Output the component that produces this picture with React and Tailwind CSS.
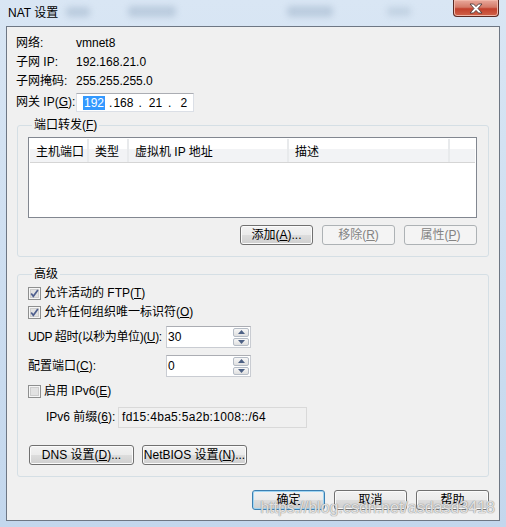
import React from 'react';

const FONT = "font-['Liberation_Sans','Noto_Sans_CJK_SC',sans-serif]";

function Check({ checked }) {
  return (
    <svg width="13" height="13" viewBox="0 0 13 13" className="shrink-0">
      <rect x="0.5" y="0.5" width="12" height="12" fill="#f6f6f6" stroke="#8e8f8f" />
      <rect x="2.5" y="2.5" width="8" height="8" fill="#e2e2e2" stroke="#cdcdcd" />
      {checked && (
        <path d="M3.2 6.4 L5.3 9.2 L9.9 2.9" fill="none" stroke="#4f5f8e" strokeWidth="1.7" />
      )}
    </svg>
  );
}

function Btn({ children, w, disabled, focus }) {
  let cls = 'border-[#707070] text-black shadow-[inset_0_0_0_1px_#fbfbfb] bg-[linear-gradient(#f2f2f2_0%,#ebebeb_50%,#dddddd_50%,#cfcfcf_100%)]';
  if (disabled) cls = 'border-[#adb2b5] text-[#838383] bg-[#f4f4f4]';
  if (focus) cls = 'border-[#3c7fb1] text-black shadow-[inset_0_0_0_1px_#9fd5f3] bg-[linear-gradient(#f2f2f2_0%,#ebebeb_50%,#dddddd_50%,#cfcfcf_100%)]';
  return (
    <div className={`${w} h-[20px] rounded-[3px] border ${cls} flex items-center justify-center whitespace-nowrap text-[12px] leading-[16px]`}>
      {children}
    </div>
  );
}

function Arrow({ up }) {
  return (
    <svg width="7" height="4" viewBox="0 0 7 4">
      <path d={up ? 'M0 4 L3.5 0 L7 4 Z' : 'M0 0 L3.5 4 L7 0 Z'} fill="#4d6185" />
    </svg>
  );
}

function Spin({ value }) {
  return (
    <div className="shrink-0 w-[85px] h-[22px] border border-[#c9ccd2] border-t-[#abadb3] bg-white flex">
      <div className="flex-1 pl-px text-[12px] leading-[20px]">{value}</div>
      <div className="w-[17px] flex flex-col gap-[1px] py-[1px] pr-[1px]">
        <div className="flex-1 border border-[#b5bcc6] rounded-[2px] bg-[linear-gradient(#f7f7f7,#e0e0e0)] flex items-center justify-center">
          <Arrow up />
        </div>
        <div className="flex-1 border border-[#b5bcc6] rounded-[2px] bg-[linear-gradient(#f7f7f7,#e0e0e0)] flex items-center justify-center">
          <Arrow />
        </div>
      </div>
    </div>
  );
}

export default function App() {
  return (
    <div className={`${FONT} w-[506px] h-[527px] relative overflow-hidden flex flex-col bg-[linear-gradient(180deg,#d9e6f4,#c3d7ed)] text-black`}>
      {/* blurred window behind the glass */}
      <div className="absolute left-[66px] top-[7px] w-[24px] h-[10px] rounded bg-[#8ea4bd]/40 blur-[3px]" />
      <div className="absolute left-[128px] top-[6px] w-[48px] h-[11px] rounded bg-[#8ea4bd]/40 blur-[3px]" />
      <div className="absolute left-[287px] top-[6px] w-[46px] h-[11px] rounded bg-[#8ea4bd]/40 blur-[3px]" />
      <div className="absolute left-[387px] top-[7px] w-[24px] h-[9px] rounded bg-[#8ea4bd]/30 blur-[3px]" />

      <div className="relative shrink-0 h-[26px] flex items-start justify-between pl-[8px] pr-[7px]">
        <div className="mt-[5px] text-[12px] leading-[16px]">NAT 设置</div>
        <div className="w-[46px] h-[17px] rounded-b-[4px] border border-t-0 border-[#5a2a24] bg-[linear-gradient(#e9a99c_0%,#d47a68_45%,#c2402c_55%,#d0634a_100%)] shadow-[inset_0_0_0_1px_#f0b6a8] flex items-center justify-center">
          <svg width="14" height="11" viewBox="0 0 14 11">
            <path d="M1 1 L4.5 1 L7 3.6 L9.5 1 L13 1 L9 5.5 L13 10 L9.5 10 L7 7.4 L4.5 10 L1 10 L5 5.5 Z" fill="#ffffff" stroke="#4b3a3a" strokeWidth="0.9" />
          </svg>
        </div>
      </div>

      <div className="mx-[6px] mb-[6px] flex-1 min-h-0 border border-[#6e7784] bg-[#f0f0f0] flex flex-col">
        <div className="pl-[9px] pt-[7px] text-[12px] leading-[19px]">
          <div className="flex h-[19px]"><span className="w-[60px]">网络:</span><span>vmnet8</span></div>
          <div className="flex h-[19px]"><span className="w-[60px]">子网 IP:</span><span>192.168.21.0</span></div>
          <div className="flex h-[19px]"><span className="w-[60px]">子网掩码:</span><span>255.255.255.0</span></div>
          <div className="flex h-[19px] mt-[2px] items-center">
            <span className="w-[60px] whitespace-nowrap">网关 IP(<u>G</u>):</span>
            <div className="w-[118px] h-[19px] border border-[#dbdfe6] border-t-[#abadb3] bg-white flex items-center leading-[14px]">
              <span className="ml-[6px] bg-[#3399ff] text-white px-px">192</span>
              <span className="ml-[4px]">.</span>
              <span className="ml-[1px]">168</span>
              <span className="ml-[5px]">.</span>
              <span className="ml-[7px]">21</span>
              <span className="ml-[6px]">.</span>
              <span className="ml-[9px]">2</span>
            </div>
          </div>
        </div>

        <fieldset className="mx-[10px] mt-[5px] border border-[#d5dfe5] rounded-[3px] pl-[10px] pr-[11px] pb-[11px]">
          <legend className="ml-[4px] px-[2px] text-[12px] leading-[16px]">端口转发(<u>F</u>)</legend>
          <div className="mt-[4px] w-[449px] h-[81px] border border-[#828790] bg-white p-px">
            <div className="h-[24px] flex text-[12px] bg-[linear-gradient(#ffffff_0%,#ffffff_45%,#f2f3f5_45%,#f2f3f5_100%)] border-b border-[#d5d5d5]">
              <div className="w-[59px] pl-[6px] pt-[5px] leading-[16px] border-r-2 border-[#e8eaec]">主机端口</div>
              <div className="w-[40px] pl-[6px] pt-[5px] leading-[16px] border-r-2 border-[#e8eaec]">类型</div>
              <div className="w-[160px] pl-[6px] pt-[5px] leading-[16px] border-r-2 border-[#e8eaec]">虚拟机 IP 地址</div>
              <div className="w-[161px] pl-[6px] pt-[5px] leading-[16px] border-r-2 border-[#e8eaec]">描述</div>
              <div className="flex-1" />
            </div>
          </div>
          <div className="mt-[7px] flex justify-end gap-[9px]">
            <Btn w="w-[73px]">添加(<u>A</u>)...</Btn>
            <Btn w="w-[73px]" disabled>移除(<u>R</u>)</Btn>
            <Btn w="w-[73px]" disabled>属性(<u>P</u>)</Btn>
          </div>
        </fieldset>

        <fieldset className="mx-[10px] mt-[9px] border border-[#d5dfe5] rounded-[3px] pl-[10px] pr-[11px] pb-[11px] text-[12px]">
          <legend className="ml-[4px] px-[2px] leading-[16px]">高级</legend>
          <div className="mt-[2px] h-[19px] flex items-center gap-[3px] leading-[19px]">
            <Check checked /><span>允许活动的 FTP(<u>T</u>)</span>
          </div>
          <div className="h-[19px] flex items-center gap-[3px] leading-[19px]">
            <Check checked /><span>允许任何组织唯一标识符(<u>O</u>)</span>
          </div>
          <div className="mt-[4px] flex items-center">
            <span className="w-[138px] shrink-0 whitespace-nowrap tracking-[-0.4px] leading-[19px]">UDP 超时(以秒为单位)(<u>U</u>):</span>
            <Spin value="30" />
          </div>
          <div className="mt-[7px] flex items-center">
            <span className="w-[138px] shrink-0 whitespace-nowrap leading-[19px]">配置端口(<u>C</u>):</span>
            <Spin value="0" />
          </div>
          <div className="mt-[5px] h-[19px] flex items-center gap-[3px] leading-[19px]">
            <Check /><span>启用 IPv6(<u>E</u>)</span>
          </div>
          <div className="mt-[6px] flex items-center">
            <span className="ml-[18px] w-[72px] shrink-0 whitespace-nowrap leading-[19px]">IPv6 前缀(<u>6</u>):</span>
            <div className="w-[189px] h-[21px] border border-[#d9d9d9] bg-[#f0f0f0] pl-[3px] leading-[19px] tracking-[0.3px]">
              fd15:4ba5:5a2b:1008::/64
            </div>
          </div>
          <div className="mt-[17px] flex gap-[8px] ml-px">
            <Btn w="w-[105px]">DNS 设置(<u>D</u>)...</Btn>
            <Btn w="w-[105px]">NetBIOS 设置(<u>N</u>)...</Btn>
          </div>
        </fieldset>

        <div className="mt-[13px] mr-[10px] flex justify-end gap-[9px]">
          <Btn w="w-[73px]" focus>确定</Btn>
          <Btn w="w-[73px]">取消</Btn>
          <Btn w="w-[73px]">帮助</Btn>
        </div>
      </div>

      <div className="absolute right-[11px] bottom-[9px] font-['Liberation_Sans',sans-serif] text-[16px] leading-[20px] text-white/75 [text-shadow:0_0_1px_#8a8a8a,0_0_1px_#8a8a8a]">
        https://blog.csdn.net/asdasd3418
      </div>
    </div>
  );
}
